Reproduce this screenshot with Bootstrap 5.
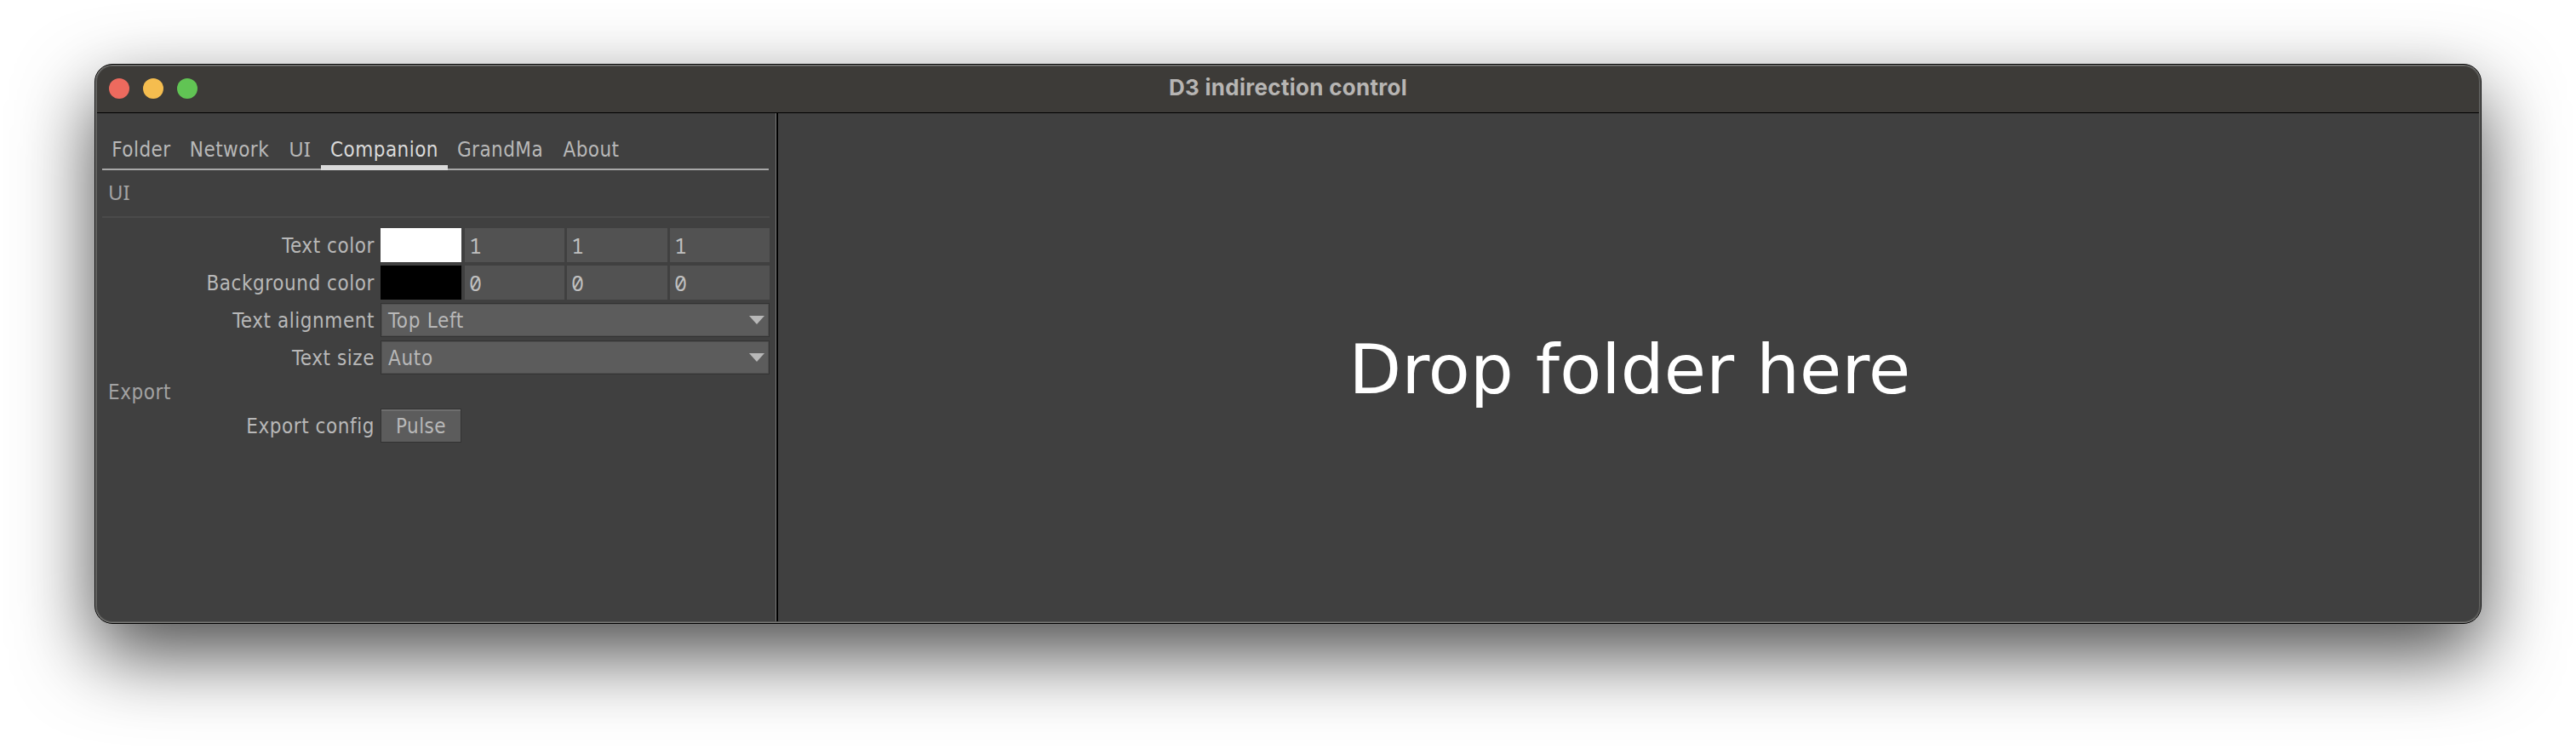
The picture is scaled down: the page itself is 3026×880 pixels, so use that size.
<!DOCTYPE html>
<html lang="en">
<head>
<meta charset="utf-8">
<title>D3 indirection control</title>
<link href="https://cdn.jsdelivr.net/npm/bootstrap@5.3.0/dist/css/bootstrap.min.css" rel="stylesheet">
<style>
body{background:#fff;width:3026px;height:880px;padding:75px 111px 147px;overflow:hidden;font-family:"DejaVu Sans Condensed","DejaVu Sans",sans-serif;font-stretch:condensed;font-size:24px;line-height:40px;letter-spacing:.55px;color:#b8b8b8}
.win{width:2804px;height:658px;border:1px solid #000;border-radius:21px;background:#404040;overflow:hidden;position:relative}
.win-shadow{width:2804px;height:658px;border-radius:21px;box-shadow:0 36px 90px rgba(0,0,0,.7)}
.win::after{content:"";position:absolute;inset:0;border-radius:20px;border:1px solid #7c7c7a;border-right-color:#6a6a68;box-shadow:inset 0 0 0 1px #5a5a58;pointer-events:none}
.titlebar{height:57px;background:#3d3b38;border-bottom:1px solid #000;padding-left:16px}
.dots{gap:16px;width:300px}
.dot{width:24px;height:24px;border-radius:50%}
.win-title{font-family:Inter,Roboto,sans-serif;font-weight:700;font-size:26px;letter-spacing:.28px;line-height:54px;padding-bottom:2px;color:#b7b5b3}
.side{width:802px;border-right:2px solid #000;box-shadow:inset -1px 0 #777;padding:20px 8px 0 8px}
.tabs{height:47px;border-bottom:2px solid #a8a8a8;width:783px}
.tab{height:47px;padding:4px 0 0;line-height:39px;text-align:center;letter-spacing:.45px}
.tab.on{color:#dadada;border-bottom:6px solid #d9d9d9}
.serif-i{font-family:"Noto Sans",sans-serif;letter-spacing:0}
.tab.serif-i{padding-top:2px}
.head{height:56px;border-bottom:2px solid #4a4a4a;padding-left:7px;line-height:52px;color:#a3a3a3;margin-bottom:12px}
.line{height:40px;margin-bottom:4px}
.lbl{width:327px;padding-right:7px;text-align:right;line-height:43px}
.swatch{width:95px;margin-right:4px}
.num{background:#525252;color:#c0c0c0;font-family:"Noto Sans Mono","DejaVu Sans Mono",monospace;font-size:25px;line-height:40px;padding-left:5px;letter-spacing:0}
.n1{width:117px;margin-right:3px}.n2{width:118px;margin-right:3px}.n3{width:117px}
.pick{width:457px;background:#5c5c5c;border:1px solid #333;box-shadow:inset 0 0 0 1px #505050;padding:0 5px 0 8px;line-height:39px;border-radius:0}
.pick span{padding-top:2px;letter-spacing:.7px}
.exp{height:40px;line-height:42px;padding-left:7px;color:#a3a3a3;margin-top:-4px}
.pulse{width:95px;height:40px;background:#5c5c5c;border:1px solid #333;border-radius:0;box-shadow:inset 0 2px #6e6e6e;font-size:24px;line-height:39px;color:#b8b8b8;padding:1px 0 0;letter-spacing:.42px}
.drop{font-family:"DejaVu Sans",sans-serif;font-stretch:normal;font-size:80px;letter-spacing:.25px;line-height:94px;padding:5px 0 0 1px;color:#fff}
</style>
</head>
<body>
<div class="win-shadow">
<main class="win d-flex flex-column">
  <header class="titlebar d-flex flex-shrink-0 align-items-center">
    <div class="dots d-flex"><span class="dot" style="background:#ed6a5e"></span><span class="dot" style="background:#f5bd4f"></span><span class="dot" style="background:#61c454"></span></div>
    <div class="win-title flex-grow-1 text-center" style="padding-right:316px">D3 indirection control</div>
  </header>
  <div class="d-flex flex-grow-1">
    <section class="side flex-shrink-0">
      <nav class="tabs d-flex">
        <div class="tab" style="width:92px">Folder</div>
        <div class="tab" style="width:115px">Network</div>
        <div class="tab serif-i" style="width:50px"><span>UI</span></div>
        <div class="tab on" style="width:149px">Companion</div>
        <div class="tab" style="width:123px">GrandMa</div>
        <div class="tab" style="width:91px">About</div>
      </nav>
      <div class="head serif-i">UI</div>
      <div class="line d-flex"><div class="lbl">Text color</div><div class="swatch bg-white"></div><div class="num n1">1</div><div class="num n2">1</div><div class="num n3">1</div></div>
      <div class="line d-flex"><div class="lbl">Background color</div><div class="swatch bg-black"></div><div class="num n1">0</div><div class="num n2">0</div><div class="num n3">0</div></div>
      <div class="line d-flex"><div class="lbl">Text alignment</div><div class="pick d-flex justify-content-between align-items-center"><span>Top Left</span><svg width="18" height="10"><path d="M0 0H18L9 10Z" fill="#b8b8b8"/></svg></div></div>
      <div class="line d-flex"><div class="lbl">Text size</div><div class="pick d-flex justify-content-between align-items-center"><span>Auto</span><svg width="18" height="10"><path d="M0 0H18L9 10Z" fill="#b8b8b8"/></svg></div></div>
      <div class="exp">Export</div>
      <div class="line d-flex"><div class="lbl">Export config</div><button class="btn pulse">Pulse</button></div>
    </section>
    <section class="flex-grow-1 d-flex align-items-center justify-content-center"><div class="drop">Drop folder here</div></section>
  </div>
</main>
</div>
<script src="https://cdn.jsdelivr.net/npm/bootstrap@5.3.0/dist/js/bootstrap.bundle.min.js"></script>
</body>
</html>
